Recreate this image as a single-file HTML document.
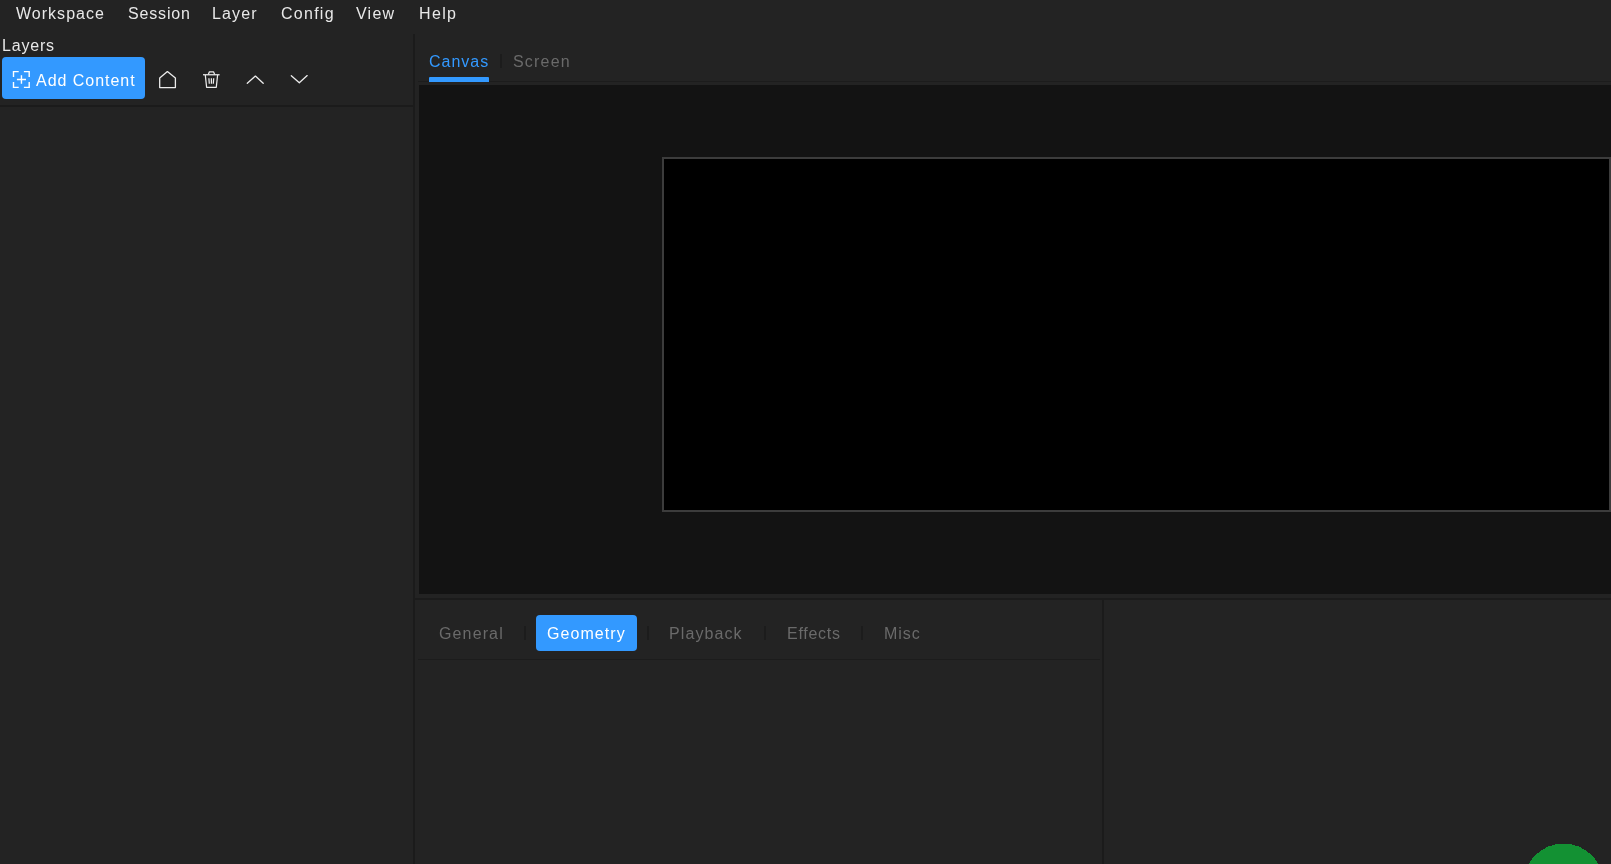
<!DOCTYPE html>
<html><head><meta charset="utf-8">
<style>
html,body{margin:0;padding:0;}
body{width:1611px;height:864px;overflow:hidden;background:#232323;position:relative;font-family:"Liberation Sans",sans-serif;}
.a{position:absolute;}
.t{position:absolute;white-space:nowrap;font-size:16px;line-height:20px;will-change:transform;}
.menu{color:#e8e8e8;}
</style></head><body>
<!-- menu -->
<div class="t menu" style="left:16.4px;top:3.5px;letter-spacing:1.02px">Workspace</div>
<div class="t menu" style="left:127.5px;top:3.6px;letter-spacing:0.83px">Session</div>
<div class="t menu" style="left:212.4px;top:3.5px;letter-spacing:1.15px">Layer</div>
<div class="t menu" style="left:280.6px;top:3.5px;letter-spacing:1.26px">Config</div>
<div class="t menu" style="left:356.2px;top:3.5px;letter-spacing:1.23px">View</div>
<div class="t menu" style="left:418.5px;top:3.5px;letter-spacing:1.37px">Help</div>

<!-- left panel -->
<div class="t menu" style="left:1.6px;top:35.6px;letter-spacing:0.8px">Layers</div>
<div class="a" style="left:2px;top:57px;width:143px;height:42px;border-radius:4px;background:#3399ff"></div>
<div class="t" style="left:36.3px;top:70.5px;letter-spacing:0.97px;color:#fff">Add Content</div>

<svg class="a" style="left:8px;top:66px" width="28" height="28" viewBox="0 0 28 28" fill="none" stroke="#fff" stroke-width="1.4" stroke-linecap="butt">
<path d="M5.5 11V5.6H10.7M15.9 5.6H21.2V11M21.2 16V21.4H15.9M10.7 21.4H5.5V16"/>
<path d="M8.9 13.45H18M13.45 9.2V17.8"/>
</svg>
<svg class="a" style="left:154px;top:66px" width="30" height="28" viewBox="0 0 30 28" fill="none" stroke="#ececec" stroke-width="1.3" stroke-linejoin="round">
<path d="M5.7 12L13.4 5.6L21.4 12V21.6H5.7Z"/>
</svg>
<svg class="a" style="left:198px;top:66px" width="28" height="28" viewBox="0 0 28 28" fill="none" stroke="#ececec" stroke-width="1.25" stroke-linejoin="round" stroke-linecap="butt">
<path d="M5.0 8.75H21.6"/>
<path d="M10.3 8.4L11.4 5.8H15.5L16.7 8.4"/>
<path d="M7.3 9L8.6 21.3H18.3L19.6 9"/>
<path d="M10.9 12.2L11.3 17.8M13.4 12.2V17.8M15.7 12.2L15.3 17.8"/>
</svg>
<svg class="a" style="left:242px;top:66px" width="28" height="28" viewBox="0 0 28 28" fill="none" stroke="#ececec" stroke-width="1.3" stroke-linejoin="round" stroke-linecap="round">
<path d="M5.3 17.3L13.4 10.1L21.2 17.3"/>
</svg>
<svg class="a" style="left:286px;top:66px" width="28" height="28" viewBox="0 0 28 28" fill="none" stroke="#ececec" stroke-width="1.3" stroke-linejoin="round" stroke-linecap="round">
<path d="M5.3 9.7L13.3 16.8L21.2 9.6"/>
</svg>
<div class="a" style="left:0;top:105px;width:413px;height:2px;background:#1b1b1b"></div>
<div class="a" style="left:413px;top:34px;width:2px;height:830px;background:#1b1b1b"></div>

<!-- canvas tabs -->
<div class="t" style="left:428.7px;top:52.2px;letter-spacing:1.0px;color:#3399ff">Canvas</div>
<div class="a" style="left:500px;top:54px;width:2px;height:14px;background:#1c1c1c"></div>
<div class="t" style="left:512.5px;top:52.2px;letter-spacing:1.2px;color:#6a6a6a">Screen</div>
<div class="a" style="left:418px;top:81px;width:1193px;height:1px;background:#1c1c1c"></div>
<div class="a" style="left:429px;top:77px;width:60px;height:5px;background:#3399ff;border-radius:1px 1px 0 0"></div>
<div class="a" style="left:419px;top:85px;width:1192px;height:509px;background:#131313"></div>
<div class="a" style="left:662px;top:157px;width:945px;height:351px;border:2px solid #3c3c3c;background:#000"></div>
<div class="a" style="left:415px;top:598px;width:1196px;height:2px;background:#1b1b1b"></div>

<!-- bottom tabs -->
<div class="t" style="left:438.6px;top:623.6px;letter-spacing:1.13px;color:#6a6a6a">General</div>
<div class="a" style="left:524px;top:626px;width:2px;height:14px;background:#1c1c1c"></div>
<div class="a" style="left:536px;top:615px;width:101px;height:36px;border-radius:4px;background:#3399ff"></div>
<div class="t" style="left:546.8px;top:623.6px;letter-spacing:1.07px;color:#fff">Geometry</div>
<div class="a" style="left:647px;top:626px;width:2px;height:14px;background:#1c1c1c"></div>
<div class="t" style="left:669.4px;top:623.6px;letter-spacing:1.09px;color:#6a6a6a">Playback</div>
<div class="a" style="left:764px;top:626px;width:2px;height:14px;background:#1c1c1c"></div>
<div class="t" style="left:786.5px;top:623.6px;letter-spacing:0.73px;color:#6a6a6a">Effects</div>
<div class="a" style="left:861px;top:626px;width:2px;height:14px;background:#1c1c1c"></div>
<div class="t" style="left:883.5px;top:623.6px;letter-spacing:0.93px;color:#6a6a6a">Misc</div>
<div class="a" style="left:418px;top:659px;width:682px;height:1px;background:#1c1c1c"></div>
<div class="a" style="left:1102px;top:600px;width:2px;height:264px;background:#1b1b1b"></div>

<svg class="a" style="left:1511px;top:830px" width="100" height="34"><circle cx="52.5" cy="53.4" r="39.9" fill="#139133" shape-rendering="crispEdges"/></svg>
</body></html>
